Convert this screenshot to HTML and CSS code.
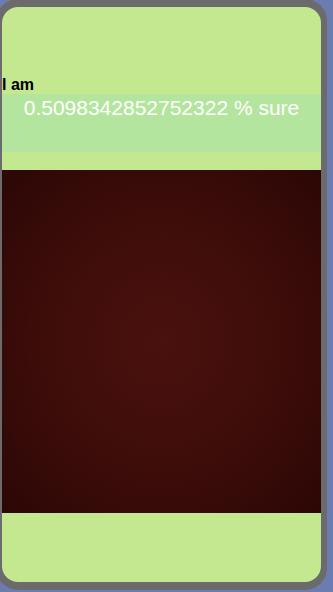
FILE: index.html
```html
<!DOCTYPE html>
<html lang="en">
<head>
    <meta charset="UTF-8">
    <meta name="viewport" content="width=device-width, initial-scale=1.0">
    <title>I am sure</title>
    <link rel="stylesheet" href="styles.css">
</head>
<body>
    <div class="device">
        <div class="screen">
            <div class="label">I am</div>
            <div class="result-band">
                <div class="result">0.5098342852752322 % sure</div>
            </div>
            <div class="camera-view"></div>
        </div>
    </div>
</body>
</html>
```
FILE: styles.css
```css
body {
    margin: 0;
    background-color: #6c7cb0;
    font-family: "Liberation Sans", Arial, sans-serif;
    overflow: hidden;
}
.device {
    width: 331px;
    height: 591px;
    margin: -1px 0 0 -4px;
    padding: 8px 6px;
    box-sizing: border-box;
    background: #6b6b6b;
    border-radius: 22px;
}
.screen {
    height: 100%;
    background: #c4e890;
    border-radius: 16px;
    overflow: hidden;
    padding-top: 69px;
    box-sizing: border-box;
}
.label {
    font-size: 16px;
    font-weight: bold;
    line-height: 18px;
    color: #000;
}
.result-band {
    height: 58px;
    background: #b4e59e;
    padding-top: 2px;
    box-sizing: border-box;
}
.result {
    font-size: 21px;
    line-height: 24px;
    color: #fff;
    text-align: center;
}
.camera-view {
    margin-top: 18px;
    height: 343px;
    background: radial-gradient(ellipse at center, #4a110e 0%, #3e0d0a 50%, #2c0705 100%);
}
```
